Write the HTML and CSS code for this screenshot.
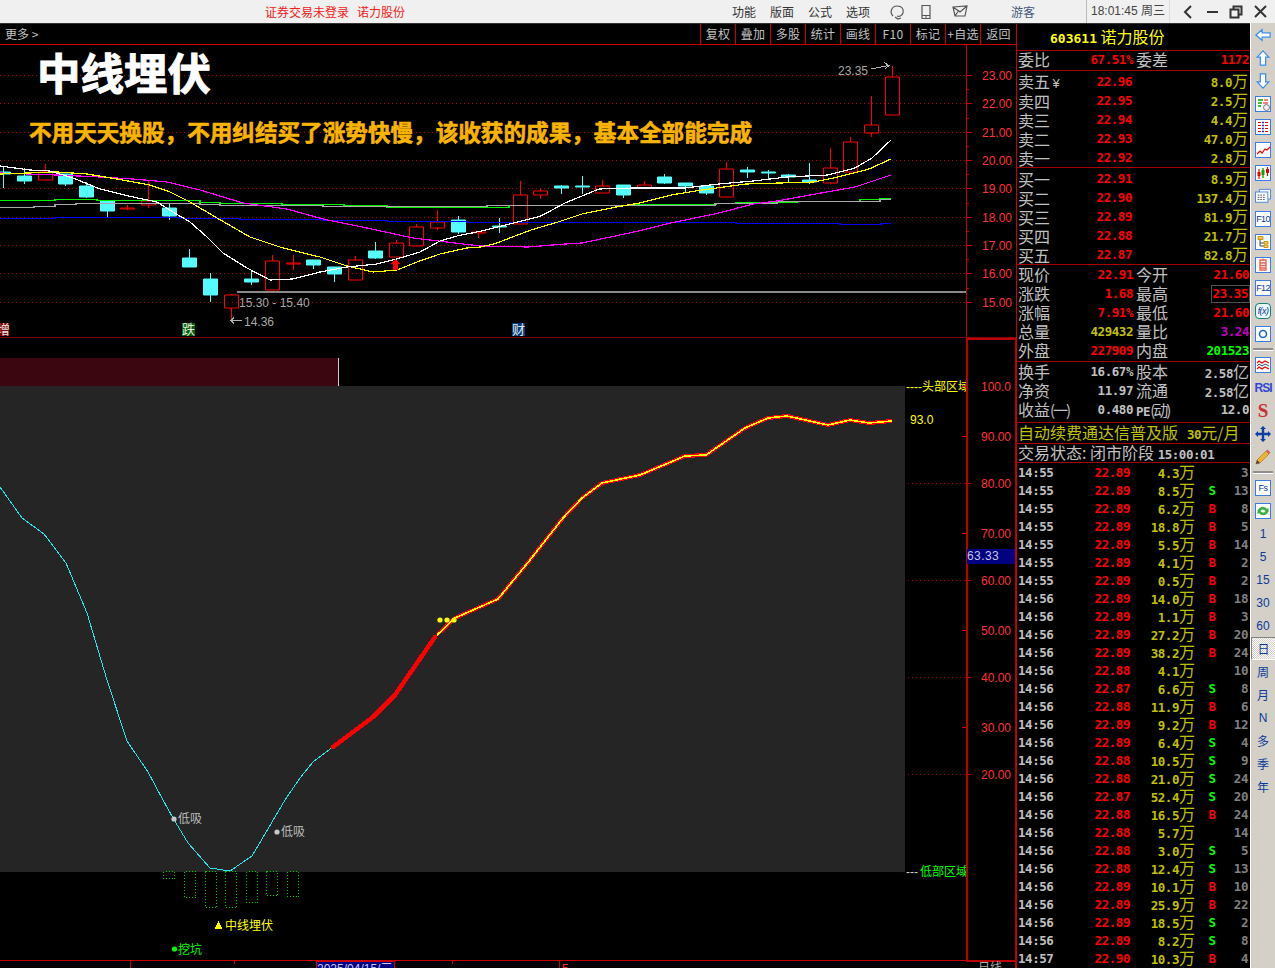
FILE: index.html
```html
<!DOCTYPE html>
<html lang="zh-CN">
<head>
<meta charset="utf-8">
<title>诺力股份 - 中线埋伏</title>
<link rel="stylesheet" href="styles.css">
</head>
<body>
<header class="titlebar">
  <div class="status"><span>证券交易未登录</span><span>诺力股份</span></div>
  <nav class="menu"><span>功能</span><span>版面</span><span>公式</span><span>选项</span></nav>
  <svg class="hicon first" viewBox="0 0 16 16"><path d="M4 12C0 8 3 2 8 2s7 3 6 7c-1 3-4 4-6 3M6 13l3 2 3-1"/></svg>
  <svg class="hicon" viewBox="0 0 16 16"><path d="M4 1.5h8v13H4zM4 11.5h8M7 13h2"/></svg>
  <svg class="hicon" viewBox="0 0 16 16"><path d="M1 3l14 -1-2 10H3zM1 3l7 5 7-6M7 6L3 12"/></svg>
  <span class="guest">游客</span>
  <span class="clock">18:01:45 周三</span>
  <div class="winctl">
    <svg viewBox="0 0 24 23"><path d="M15 6l-6 6 6 6"/></svg>
    <svg viewBox="0 0 24 23"><path d="M7 12h11"/></svg>
    <svg viewBox="0 0 24 23"><path d="M6.5 9.5h8v8h-8zM9.5 9V6.5h8v8H15"/></svg>
    <svg viewBox="0 0 24 23"><path d="M7 6l11 11M18 6L7 17"/></svg>
  </div>
</header>

<main class="workspace">
  <section class="chartcol">
    <div class="charttools">
      <span class="more">更多 &gt;</span>
      <div class="btns"><span>复权</span><span>叠加</span><span>多股</span><span>统计</span><span>画线</span><span>F10</span><span>标记</span><span>+自选</span><span>返回</span></div>
    </div>
    <svg class="chart" viewBox="0 45 1016 923" width="1016" height="923">
      <defs><clipPath id="paneclip"><rect x="0" y="338" width="966" height="622"/></clipPath></defs>

      <path class="dots" d="M0 75.5H966M0 103.5H966M0 132.5H966M0 160.5H966M0 188.5H966M0 217.5H966M0 245.5H966M0 273.5H966M0 302.5H966"/>
      <path class="gray-level" d="M237 292H966"/>

      <path class="candle-down" d="M3.5 167V188M-3.5 172h14v2h-14zM24.5 168V184M17.5 176h14v5h-14zM65.5 174V186M58.5 174h14v10h-14zM86.5 182V198M79.5 186h14v11h-14zM107.5 201V217M100.5 201h14v10h-14zM169.5 204V220M162.5 208h14v8h-14zM189.5 249V267M182.5 258h14v9h-14zM210.5 273V302M203.5 279h14v16h-14zM251.5 271V285M244.5 279h14v3h-14zM313.5 260V269M306.5 260h14v5h-14zM334.5 267V282M327.5 267h14v7h-14zM375.5 242V259M368.5 251h14v7h-14zM458.5 216V234M451.5 220h14v12h-14zM499.5 218V233M492.5 226h14v1h-14zM561.5 185V194M554.5 186h14v2h-14zM582.5 176V194M575.5 186h14v1h-14zM623.5 185V198M616.5 185h14v10h-14zM664.5 174V184M657.5 177h14v6h-14zM685.5 183V192M678.5 183h14v3h-14zM706.5 186V195M699.5 186h14v7h-14zM747.5 167V178M740.5 170h14v2h-14zM768.5 170V179M761.5 172h14v1h-14zM788.5 174V182M781.5 175h14v2h-14zM809.5 163V184M802.5 180h14v2h-14z"/>
      <path class="candle-up" d="M45.5 164V172M38.5 172h14v8h-14zM127.5 205V210M120.5 208h14v1h-14zM148.5 180V201M148.5 205V208M141.5 201h14v4h-14zM231.5 294V295M231.5 308V320M224.5 295h14v13h-14zM272.5 255V261M265.5 261h14v29h-14zM293.5 255V270M286.5 263h14v1h-14zM355.5 256V260M348.5 260h14v20h-14zM396.5 240V243M389.5 243h14v14h-14zM416.5 224V227M409.5 227h14v19h-14zM437.5 210V222M437.5 228V230M430.5 222h14v6h-14zM478.5 232V238M471.5 232h14v1h-14zM520.5 181V195M513.5 195h14v29h-14zM540.5 188V191M540.5 195V199M533.5 191h14v4h-14zM602.5 180V186M595.5 186h14v7h-14zM644.5 181V185M637.5 185h14v3h-14zM726.5 162V169M719.5 169h14v28h-14zM830.5 148V168M830.5 183V184M823.5 168h14v15h-14zM850.5 137V142M843.5 142h14v30h-14zM871.5 96V125M871.5 133V137M864.5 125h14v8h-14zM892.5 66V77M885.5 77h14v38h-14z"/>

      <path class="ma blue" d="M0 218.5H55V217.5H180V218.5H240V219.5H323V220.5H387V221.5H467V222.5H736V223.5H840V224.5H881V223.5H891"/>
      <path class="ma green" d="M0 200.5H55V199.5H97V200.5H200V202.5H220V203.5H282V204.5H344V205.5H387V207.5H509V205.5H633V204.5H716V203.5H736V202.5H797V201.5H860V199.5H880V198.5H891"/>
      <path class="ma silver" d="M0 207.5H34V206.5H55V204.5H76V203.5H200V204.5H220V205.5H323V206.5H487V205.5H715V203.5H777V201.5H880V199.5H891"/>
      <polyline class="ma magenta" points="0,173 57,175 100,177 133,179 167,182 200,190 243,203 287,209 323,219 367,228 413,238 447,242 480,246 528,247 565,244 582,243 634,232 671,223 719,213 753,204 777,201 821,193 855,187 891,175"/>
      <polyline class="ma yellow" points="0,174 57,172 87,174 117,179 150,185 170,192 190,202 217,218 250,237 283,248 320,257 347,266 373,272 397,270 417,262 440,254 467,248 480,247 494,244 531,230 558,222 582,214 616,207 640,203 671,195 702,190 746,184 814,182 838,177 869,169 891,159"/>
      <polyline class="ma white" points="0,166 30,170 50,171 73,178 100,189 133,197 157,202 173,212 190,222 207,237 223,253 247,268 270,280 293,279 320,272 347,267 377,264 400,258 420,252 440,241 457,236 477,232 514,223 541,216 565,203 599,189 634,188 685,188 719,184 753,181 787,177 828,175 855,168 872,158 891,140"/>
      <polygon class="red-fill" points="395.5,259 390,264 393,264 393,270 398,270 398,264 401,264"/>

      <text class="headline" x="37" y="90">中线埋伏</text>
      <text class="subline" x="29" y="141">不用天天换股<tspan class="tc">，</tspan>不用纠结买了涨势快慢<tspan class="tc">，</tspan>该收获的成果<tspan class="tc">，</tspan>基本全部能完成</text>

      <text class="note" x="838" y="75">23.35</text>
      <path class="note-line" d="M871 69L889 65.5M884 62.5L889 65.5L885 69"/>
      <text class="note" x="239" y="307">15.30 - 15.40</text>
      <path class="note-line" d="M231 320.5H242M234 317.5L231 320.5L234 323.5"/>
      <text class="note" x="244" y="326">14.36</text>

      <rect class="tag-red" x="0" y="323" width="9" height="13"/>
      <text class="tag" x="-3" y="334">增</text>
      <rect class="tag-green" x="182" y="323" width="13" height="13"/>
      <text class="tag" x="182" y="334">跌</text>
      <rect class="tag-blue" x="512" y="323" width="13" height="13"/>
      <text class="tag" x="512" y="334">财</text>

      <text class="axis" x="982" y="80">23.00</text>
      <text class="axis" x="982" y="108">22.00</text>
      <text class="axis" x="982" y="137">21.00</text>
      <text class="axis" x="982" y="165">20.00</text>
      <text class="axis" x="982" y="193">19.00</text>
      <text class="axis" x="982" y="222">18.00</text>
      <text class="axis" x="982" y="250">17.00</text>
      <text class="axis" x="982" y="278">16.00</text>
      <text class="axis" x="982" y="307">15.00</text>
      <path class="frame" d="M966.5 45V337M966 75.5h6M966 103.5h6M966 132.5h6M966 160.5h6M966 188.5h6M966 217.5h6M966 245.5h6M966 273.5h6M966 302.5h6M966 89.5h3M966 118.5h3M966 146.5h3M966 174.5h3M966 203.5h3M966 231.5h3M966 259.5h3M966 288.5h3"/>
      <path class="rule-dim" d="M0 337.5H1016"/>

      <rect class="band" x="0" y="358" width="338" height="28"/>
      <path class="band-edge" d="M338.5 358V386"/>
      <path class="dots" d="M908 483.5H966M908 580.5H966M908 677.5H966M908 774.5H966"/>
      <rect class="plot" x="0" y="386" width="905" height="486"/>

      <polyline class="cyan" points="0,487 22,518 44,534 66,563 87,613 107,680 127,741 148,772 163,800 173,818 188,843 210,868 230,871 252,856 285,800 300,778 313,762 333,747"/>
      <polyline class="thick-red" points="333,747 373,717 395,695 435,637"/>
      <polyline class="outline-red" points="437,635 455,618 498,599 530,560 563,518 582,498 602,483 640,475 685,456 706,455 745,428 768,418 787,416 828,425 850,420 869,423 892,421"/>
      <polyline class="thin-yellow" points="437,635 455,618 498,599 530,560 563,518 582,498 602,483 640,475 685,456 706,455 745,428 768,418 787,416 828,425 850,420 869,423 892,421"/>
      <circle class="yellow-fill" cx="440" cy="620" r="2.6"/><circle class="yellow-fill" cx="447" cy="620" r="2.6"/><circle class="yellow-fill" cx="454" cy="620" r="2.6"/>
      <circle class="gray-fill" cx="174" cy="819" r="2.6"/><text class="sig" x="178" y="823">低吸</text>
      <circle class="gray-fill" cx="277" cy="832" r="2.6"/><text class="sig" x="281" y="836">低吸</text>

      <path class="dotbars" d="M163.5 871.5v7h11v-7zM184.5 871.5v26h11v-26zM205.5 871.5v36h11v-36zM225.5 871.5v36h11v-36zM246.5 871.5v31h11v-31zM266.5 871.5v24h11v-24zM287.5 871.5v25h11v-25z"/>
      <polygon class="yellow-fill" points="218.5,921 222.5,929 214.5,929"/>
      <text class="sig-y" x="225" y="930">中线埋伏</text>
      <circle class="green-fill" cx="174.5" cy="949" r="2.6"/>
      <text class="sig-g" x="178" y="954">挖坑</text>

      <g clip-path="url(#paneclip)">
        <text class="sig-y" x="906" y="391">----头部区域</text>
        <text class="sig-g" x="906" y="876"><tspan class="dash-gray">---</tspan><tspan dx="2">低部区域</tspan></text>
      </g>
      <text class="sig-y" x="910" y="424">93.0</text>

      <text class="axis" x="981" y="391">100.0</text>
      <text class="axis" x="981" y="441">90.00</text>
      <text class="axis" x="981" y="488">80.00</text>
      <text class="axis" x="981" y="538">70.00</text>
      <text class="axis" x="981" y="585">60.00</text>
      <text class="axis" x="981" y="635">50.00</text>
      <text class="axis" x="981" y="682">40.00</text>
      <text class="axis" x="981" y="732">30.00</text>
      <text class="axis" x="981" y="779">20.00</text>

      <rect class="frame-box" x="966.5" y="338.5" width="49" height="622"/>
      <path class="frame" d="M0 960.5H966M962 386.5h4M962 436.5h4M966 483.5h5M962 533.5h4M966 580.5h5M962 630.5h4M966 677.5h5M962 727.5h4M966 774.5h5"/>
      <rect class="price-box" x="967" y="549" width="48" height="15"/>
      <text class="price-text" x="967" y="560">63.33</text>

      <path class="frame" d="M130.5 961V968M234.5 961V964M452.5 961V964M559.5 961V968M1015.500 961V968"/>
      <rect class="date-box" x="316" y="961" width="78" height="12"/>
      <text class="date-text" x="317" y="973">2025/04/15/三</text>
      <text class="axis" x="562" y="973">5</text>
      <text class="bottom-unit" x="978" y="972">日线</text>
    </svg>
  </section>

  <aside class="quote">
    <div class="qsec qtitle"><b class="n">603611</b> 诺力股份</div>
    <div class="qsec qpair"><div class="kv"><span class="l">委比</span><b class="n red">67.51%</b></div><div class="kv"><span class="l">委差</span><b class="n red">1172</b></div></div>
    <div class="qsec book">
      <div class="ob"><span class="l">卖五 <i class="yen">¥</i></span><b class="n red">22.96</b><span class="vol"><b class="n">8.0</b>万</span></div>
      <div class="ob"><span class="l">卖四</span><b class="n red">22.95</b><span class="vol"><b class="n">2.5</b>万</span></div>
      <div class="ob"><span class="l">卖三</span><b class="n red">22.94</b><span class="vol"><b class="n">4.4</b>万</span></div>
      <div class="ob"><span class="l">卖二</span><b class="n red">22.93</b><span class="vol"><b class="n">47.0</b>万</span></div>
      <div class="ob"><span class="l">卖一</span><b class="n red">22.92</b><span class="vol"><b class="n">2.8</b>万</span></div>
    </div>
    <div class="qsec book">
      <div class="ob"><span class="l">买一</span><b class="n red">22.91</b><span class="vol"><b class="n">8.9</b>万</span></div>
      <div class="ob"><span class="l">买二</span><b class="n red">22.90</b><span class="vol"><b class="n">137.4</b>万</span></div>
      <div class="ob"><span class="l">买三</span><b class="n red">22.89</b><span class="vol"><b class="n">81.9</b>万</span></div>
      <div class="ob"><span class="l">买四</span><b class="n red">22.88</b><span class="vol"><b class="n">21.7</b>万</span></div>
      <div class="ob"><span class="l">买五</span><b class="n red">22.87</b><span class="vol"><b class="n">82.8</b>万</span></div>
    </div>
    <div class="qsec stats">
      <div class="kv"><span class="l">现价</span><b class="n red">22.91</b></div><div class="kv"><span class="l">今开</span><b class="n red">21.60</b></div>
      <div class="kv"><span class="l">涨跌</span><b class="n red">1.68</b></div><div class="kv"><span class="l">最高</span><b class="n red boxed">23.35</b></div>
      <div class="kv"><span class="l">涨幅</span><b class="n red">7.91%</b></div><div class="kv"><span class="l">最低</span><b class="n red">21.60</b></div>
      <div class="kv"><span class="l">总量</span><b class="n olive">429432</b></div><div class="kv"><span class="l">量比</span><b class="n purple">3.24</b></div>
      <div class="kv"><span class="l">外盘</span><b class="n red">227909</b></div><div class="kv"><span class="l">内盘</span><b class="n green">201523</b></div>
    </div>
    <div class="qsec stats finance">
      <div class="kv"><span class="l">换手</span><b class="n">16.67%</b></div><div class="kv"><span class="l">股本</span><span class="amt"><b class="n">2.58</b>亿</span></div>
      <div class="kv"><span class="l">净资</span><b class="n">11.97</b></div><div class="kv"><span class="l">流通</span><span class="amt"><b class="n">2.58</b>亿</span></div>
      <div class="kv"><span class="l">收益<span class="paren">(一)</span></span><b class="n">0.480</b></div><div class="kv"><span class="l pe"><b class="n">PE</b><span class="paren">(动)</span></span><b class="n">12.0</b></div>
    </div>
    <div class="qsec promo">自动续费通达信普及版<b class="n promo-n">30</b>元/月</div>
    <div class="qsec state">交易状态: 闭市阶段 <b class="n">15:00:01</b></div>
    <div class="ticks">
      <div class="tk"><b class="n">14:55</b><b class="n red">22.89</b><span class="vol"><b class="n">4.3</b>万</span><b class="n side"></b><b class="n cnt">3</b></div>
      <div class="tk"><b class="n">14:55</b><b class="n red">22.89</b><span class="vol"><b class="n">8.5</b>万</span><b class="n side s">S</b><b class="n cnt">13</b></div>
      <div class="tk"><b class="n">14:55</b><b class="n red">22.89</b><span class="vol"><b class="n">6.2</b>万</span><b class="n side b">B</b><b class="n cnt">8</b></div>
      <div class="tk"><b class="n">14:55</b><b class="n red">22.89</b><span class="vol"><b class="n">18.8</b>万</span><b class="n side b">B</b><b class="n cnt">5</b></div>
      <div class="tk"><b class="n">14:55</b><b class="n red">22.89</b><span class="vol"><b class="n">5.5</b>万</span><b class="n side b">B</b><b class="n cnt">14</b></div>
      <div class="tk"><b class="n">14:55</b><b class="n red">22.89</b><span class="vol"><b class="n">4.1</b>万</span><b class="n side b">B</b><b class="n cnt">2</b></div>
      <div class="tk"><b class="n">14:55</b><b class="n red">22.89</b><span class="vol"><b class="n">0.5</b>万</span><b class="n side b">B</b><b class="n cnt">2</b></div>
      <div class="tk"><b class="n">14:56</b><b class="n red">22.89</b><span class="vol"><b class="n">14.0</b>万</span><b class="n side b">B</b><b class="n cnt">18</b></div>
      <div class="tk"><b class="n">14:56</b><b class="n red">22.89</b><span class="vol"><b class="n">1.1</b>万</span><b class="n side b">B</b><b class="n cnt">3</b></div>
      <div class="tk"><b class="n">14:56</b><b class="n red">22.89</b><span class="vol"><b class="n">27.2</b>万</span><b class="n side b">B</b><b class="n cnt">20</b></div>
      <div class="tk"><b class="n">14:56</b><b class="n red">22.89</b><span class="vol"><b class="n">38.2</b>万</span><b class="n side b">B</b><b class="n cnt">24</b></div>
      <div class="tk"><b class="n">14:56</b><b class="n red">22.88</b><span class="vol"><b class="n">4.1</b>万</span><b class="n side"></b><b class="n cnt">10</b></div>
      <div class="tk"><b class="n">14:56</b><b class="n red">22.87</b><span class="vol"><b class="n">6.6</b>万</span><b class="n side s">S</b><b class="n cnt">8</b></div>
      <div class="tk"><b class="n">14:56</b><b class="n red">22.88</b><span class="vol"><b class="n">11.9</b>万</span><b class="n side b">B</b><b class="n cnt">6</b></div>
      <div class="tk"><b class="n">14:56</b><b class="n red">22.89</b><span class="vol"><b class="n">9.2</b>万</span><b class="n side b">B</b><b class="n cnt">12</b></div>
      <div class="tk"><b class="n">14:56</b><b class="n red">22.89</b><span class="vol"><b class="n">6.4</b>万</span><b class="n side s">S</b><b class="n cnt">4</b></div>
      <div class="tk"><b class="n">14:56</b><b class="n red">22.88</b><span class="vol"><b class="n">10.5</b>万</span><b class="n side s">S</b><b class="n cnt">9</b></div>
      <div class="tk"><b class="n">14:56</b><b class="n red">22.88</b><span class="vol"><b class="n">21.0</b>万</span><b class="n side s">S</b><b class="n cnt">24</b></div>
      <div class="tk"><b class="n">14:56</b><b class="n red">22.87</b><span class="vol"><b class="n">52.4</b>万</span><b class="n side s">S</b><b class="n cnt">20</b></div>
      <div class="tk"><b class="n">14:56</b><b class="n red">22.88</b><span class="vol"><b class="n">16.5</b>万</span><b class="n side b">B</b><b class="n cnt">24</b></div>
      <div class="tk"><b class="n">14:56</b><b class="n red">22.88</b><span class="vol"><b class="n">5.7</b>万</span><b class="n side"></b><b class="n cnt">14</b></div>
      <div class="tk"><b class="n">14:56</b><b class="n red">22.88</b><span class="vol"><b class="n">3.0</b>万</span><b class="n side s">S</b><b class="n cnt">5</b></div>
      <div class="tk"><b class="n">14:56</b><b class="n red">22.88</b><span class="vol"><b class="n">12.4</b>万</span><b class="n side s">S</b><b class="n cnt">13</b></div>
      <div class="tk"><b class="n">14:56</b><b class="n red">22.89</b><span class="vol"><b class="n">10.1</b>万</span><b class="n side b">B</b><b class="n cnt">10</b></div>
      <div class="tk"><b class="n">14:56</b><b class="n red">22.89</b><span class="vol"><b class="n">25.9</b>万</span><b class="n side b">B</b><b class="n cnt">22</b></div>
      <div class="tk"><b class="n">14:56</b><b class="n red">22.89</b><span class="vol"><b class="n">18.5</b>万</span><b class="n side s">S</b><b class="n cnt">2</b></div>
      <div class="tk"><b class="n">14:56</b><b class="n red">22.89</b><span class="vol"><b class="n">8.2</b>万</span><b class="n side s">S</b><b class="n cnt">8</b></div>
      <div class="tk"><b class="n">14:57</b><b class="n red">22.90</b><span class="vol"><b class="n">10.3</b>万</span><b class="n side b">B</b><b class="n cnt">4</b></div>
    </div>
  </aside>

  <nav class="tools">
    <div class="tool"><svg class="ico" viewBox="0 0 18 16"><path class="ar" d="M1 8L8 2v3.5h9v5H8V14z"/></svg></div>
    <div class="tool"><svg class="ico" viewBox="0 0 16 18"><path class="ar" d="M8 1l6.500 7H11v9H5V8H1.500z"/></svg></div>
    <div class="tool"><svg class="ico" viewBox="0 0 16 18"><path class="ar" d="M8 17L1.500 10H5V1h6v9h3.500z"/></svg></div>
    <div class="tool"><svg class="ico" viewBox="0 0 16 16"><rect class="bx" x=".5" y=".5" width="15" height="15"/><path class="i-g" d="M3 4h5M3 7h4M3 10h3"/><path class="i-r" d="M9 4h4M8 7h5"/><circle class="i-k" cx="11.500" cy="11.500" r="3"/></svg></div>
    <div class="tool"><svg class="ico" viewBox="0 0 16 16"><rect class="bx" x=".5" y=".5" width="15" height="15"/><path class="i-r" d="M3 3.500h3M3 6.500h3M3 9.500h3M3 12.500h3"/><path class="i-b" d="M7 3.500h2M7 6.500h2M7 9.500h2M7 12.500h2"/><path class="i-r" d="M10 3.500h3M10 6.500h3M10 9.500h3M10 12.500h3"/></svg></div>
    <div class="tool"><svg class="ico" viewBox="0 0 16 16"><rect class="bx" x=".5" y=".5" width="15" height="15"/><path class="i-r" d="M2 12l3-3 2 2 3-4 2 1 3-3"/></svg></div>
    <div class="tool"><svg class="ico" viewBox="0 0 16 16"><rect class="bx" x=".5" y=".5" width="15" height="15"/><path class="i-r" d="M4 4v10M12.500 2v9"/><path class="i-g" d="M8 3v10"/><path class="i-fr" d="M2.500 7h3v4h-3zM11 4h3v4h-3z"/><path class="i-fg" d="M6.500 5h3v5h-3z"/></svg></div>
    <div class="tool"><svg class="ico" viewBox="0 0 18 16"><path class="bx" d="M5 .5h12.500v11H5z"/><rect class="bx" x=".5" y="3.500" width="14" height="11.500"/><path class="i-n" d="M3 7h9M3 9.500h9M3 12h9" stroke-dasharray="2 1"/></svg></div>
    <div class="tool"><span class="boxtxt">F10</span></div>
    <div class="tool"><svg class="ico" viewBox="0 0 16 16"><rect class="bx" x=".5" y=".5" width="15" height="15"/><path class="i-n" d="M5 6v6h4M5 9h4"/><path class="i-o" d="M3 2.500h5v3H3zM9 7.500h4v2.500H9zM9 11h4v2.500H9z"/></svg></div>
    <div class="tool"><svg class="ico" viewBox="0 0 16 16"><rect class="bx" x=".5" y=".5" width="15" height="15"/><path class="i-o2" d="M5 3h6v10H5zM5 6h6M5 8.500h6M5 11h6M8 1.500V3"/></svg></div>
    <div class="tool"><span class="boxtxt">F12</span></div>
    <div class="tool"><span class="boxtxt fx">f(x)</span></div>
    <div class="tool"><svg class="ico" viewBox="0 0 16 16"><rect class="bx" x=".5" y=".5" width="15" height="15"/><circle class="i-c" cx="8" cy="8" r="3.500"/></svg></div>
    <div class="toolsep"></div>
    <div class="tool"><svg class="ico" viewBox="0 0 16 16"><rect class="bx" x=".5" y=".5" width="15" height="15"/><path class="i-r" d="M2 6l2-2 3 2 3-2 4 2"/><path class="i-n" d="M2 9l2-2 3 2 3-2 4 2"/><path class="i-r" d="M2 12l2-2 3 2 3-2 4 2"/></svg></div>
    <div class="tool"><b class="rsi">RSI</b></div>
    <div class="tool"><b class="sbig">S</b></div>
    <div class="tool"><svg class="ico big" viewBox="0 0 16 16"><path class="i-fb" d="M8 0l3 3H9.200v3.800H13V5l3 3-3 3V9.200H9.200V13H11l-3 3-3-3h1.800V9.200H3V11L0 8l3-3v1.800h3.800V3H5z"/></svg></div>
    <div class="tool"><svg class="ico big" viewBox="0 0 16 16"><path class="i-pen" d="M2 11L11 2l3 3-9 9-4 1z"/><path class="i-tip" d="M11 2l1.500-1.500 3 3L14 5z"/><path class="i-nib" d="M2 11l3 3-4 1z"/></svg></div>
    <div class="toolsep"></div>
    <div class="tool"><span class="boxtxt">Fs</span></div>
    <div class="tool"><svg class="ico" viewBox="0 0 16 16"><rect class="bx" x=".5" y=".5" width="15" height="15"/><path class="i-rf" d="M3 7c1-3 6-5 9-1l1.500-1v4h-4l1-1c-2-2-4-2-5 0zM13 9c-1 3-6 5-9 1L2.500 11V7h4l-1 1c2 2 4 2 5 0z"/></svg></div>
    <div class="tool txt">1</div><div class="tool txt">5</div><div class="tool txt">15</div><div class="tool txt">30</div><div class="tool txt">60</div>
    <div class="tool txt active">日</div><div class="tool txt">周</div><div class="tool txt">月</div><div class="tool txt">N</div><div class="tool txt">多</div><div class="tool txt">季</div><div class="tool txt">年</div>
  </nav>
</main>
</body>
</html>
```

FILE: styles.css
```css
* { box-sizing: border-box; }
html, body { margin: 0; padding: 0; height: 100%; }
body {
  width: 1275px; height: 968px; overflow: hidden; background: #000;
  display: flex; flex-direction: column;
  font-family: "Noto Sans CJK SC", "Liberation Sans", sans-serif;
}

/* title bar */
.titlebar {
  height: 24px; flex: none; display: flex; align-items: center;
  background: #f0f0f0; border-bottom: 1px solid #333; font-size: 12px; color: #333; line-height: 23px;
}
.status { margin-left: 265px; width: 467px; flex: none; color: #f3201a; display: flex; gap: 8px; }
.menu { display: flex; gap: 14px; width: 139px; flex: none; white-space: nowrap; }
.hicon { width: 16px; height: 16px; flex: none; fill: none; stroke: #555; stroke-width: 1.2; margin-right: 18px; }
.hicon.first { margin-left: 18px; margin-right: 13px; }
.guest { color: #445a7a; margin-left: 25px; width: 75px; flex: none; }
.clock {
  width: 84px; height: 23px; flex: none; padding-left: 4px; color: #444; border-left: 1px solid #bbb; border-right: 1px solid #ddd; white-space: nowrap;
  font-family: "Liberation Sans", "Noto Sans CJK SC", sans-serif;
}
.winctl { display: flex; margin-left: 6px; flex: none; }
.winctl svg { width: 24px; height: 23px; fill: none; stroke: #333; stroke-width: 2; }

/* layout */
.workspace { flex: 1; display: flex; min-height: 0; }
.chartcol { width: 1016px; flex: none; display: flex; flex-direction: column; }
.charttools {
  height: 21px; flex: none; display: flex; justify-content: space-between;
  border-bottom: 1px solid #c00; color: #c0c0c0; font-size: 12px; line-height: 20px;
}
.more { padding-left: 5px; }
.btns { display: flex; }
.btns span { width: 35px; text-align: center; border-left: 1px solid #c00; white-space: nowrap; letter-spacing: .3px; }
.btns span:last-child { width: 36px; }
.chart { display: block; flex: none; shape-rendering: crispEdges; }

/* chart classes */
.dots { fill: none; stroke: #b30000; stroke-width: 1; stroke-dasharray: 1 3; }
.gray-level { stroke: #8a8a8a; stroke-width: 2; fill: none; }
.candle-down { stroke: #54fcfc; fill: #54fcfc; stroke-width: 1; shape-rendering: geometricPrecision; }
.candle-up { stroke: #f00; fill: none; stroke-width: 1; shape-rendering: geometricPrecision; }
.ma { fill: none; stroke-width: 1.2; }
.blue { stroke: #0000f0; }
.green { stroke: #00f000; }
.silver { stroke: #a8a8a8; }
.magenta { stroke: #f0f; }
.yellow { stroke: #ff0; }
.white { stroke: #fff; }
.red-fill { fill: #f00; }
.yellow-fill { fill: #ff0; }
.gray-fill { fill: #c8c8c8; }
.green-fill { fill: #0f0; }
circle { shape-rendering: geometricPrecision; }
.headline { fill: #fff; font-size: 43.5px; font-weight: 700; stroke: #fff; stroke-width: 1; }
.subline { fill: #f9b400; font-size: 22.6px; font-weight: 700; stroke: #f9b400; stroke-width: .6; }
.tc { font-family: "Noto Sans CJK TC", sans-serif; }
.note { fill: #a8a8a8; font: 12px "Liberation Sans", sans-serif; }
.note-line { fill: none; stroke: #b0b0b0; }
.tag-red { fill: #7a0000; } .tag-green { fill: #006000; } .tag-blue { fill: #003a78; }
.tag { fill: #e8e8e8; font-size: 13px; }
.axis { fill: #f33; font: 12px "Liberation Sans", sans-serif; }
.frame { fill: none; stroke: #c00; }
.frame-box { fill: none; stroke: #b00; stroke-width: 2; }
.rule-dim { stroke: #800; fill: none; }
.band { fill: #3c0610; }
.band-edge { stroke: #ccc; fill: none; }
.plot { fill: #252525; }
.cyan { fill: none; stroke: #28e6ec; stroke-width: 1; }
.thick-red { fill: none; stroke: #f00; stroke-width: 4.5; stroke-linecap: round; }
.outline-red { fill: none; stroke: #f00; stroke-width: 4; }
.thin-yellow { fill: none; stroke: #ff0; stroke-width: 1.6; }
.sig { fill: #bbb; font-size: 12px; }
.sig-y { fill: #ff0; font: 12px "Liberation Sans", "Noto Sans CJK SC", sans-serif; }
.sig-g { fill: #0f0; font: 12px "Liberation Sans", "Noto Sans CJK SC", sans-serif; }
.dash-gray { fill: #ccc; }
.dotbars { fill: none; stroke: #0c0; stroke-dasharray: 1 2; }
.price-box { fill: #000080; }
.price-text { fill: #c8c8e8; font: 12px "Liberation Sans", sans-serif; letter-spacing: .4px; }
.date-box { fill: #000080; stroke: #c00; }
.date-text { fill: #c8c8e8; font: 12px "Liberation Sans", "Noto Sans CJK SC", sans-serif; }
.bottom-unit { fill: #aaa; font-size: 12px; }

/* quote panel */
.quote {
  width: 234px; flex: none; display: flex; flex-direction: column; background: #000;
  border-left: 1px solid #c00; color: #c0c0c0; font-size: 16px; overflow: hidden;
}
.n { display: inline-block; padding-bottom: 2px; font-family: "DejaVu Sans Mono", "Noto Sans CJK SC", monospace; font-size: 12.500px; font-weight: 700; letter-spacing: -.45px; line-height: 15px; }
.l { display: block; font-size: 16px; color: #c0c0c0; line-height: 17px; padding-bottom: 2px; white-space: nowrap; }
.red { color: #f00; } .olive { color: #c0c000; } .purple { color: #c000c0; } .green { color: #0f0; }
.qsec { flex: none; border-bottom: 1px solid #a50000; }
.qtitle { height: 27px; color: #ff0; padding-left: 33px; line-height: 25px; white-space: nowrap; }
.qtitle .n { font-size: 13px; letter-spacing: 0; }
.qpair { height: 20px; display: grid; grid-template-columns: 115px 113px; column-gap: 3px; padding-left: 1px; }
.kv { display: flex; justify-content: space-between; align-items: center; height: 19px; line-height: 19px; min-width: 0; }
.kv .l { flex: none; }
.book { height: 97px; padding: 1px 0 0 1px; }
.ob { display: grid; grid-template-columns: 46px 68px 116px; height: 19px; line-height: 19px; align-items: center; }
.ob .n.red { text-align: right; padding-bottom: 4px; }
.yen { font-style: normal; font-size: 13px; font-family: "Liberation Sans", sans-serif; margin-left: -1px; }
.vol { color: #c0c000; text-align: right; font-size: 16px; white-space: nowrap; line-height: 17px; padding-bottom: 4px; }
.vol .n { padding-bottom: 0; }
.stats { height: 97px; padding: 1px 0 0 1px; display: grid; grid-template-columns: 115px 113px; column-gap: 3px; grid-auto-rows: 19px; }
.finance { height: 61px; }
.finance .n { color: #c0c0c0; }
.paren { letter-spacing: -2px; display: inline-block; font-size: 15px; }
.pe { font-size: 15px; }
.pe .n { padding: 0; }
.amt { white-space: nowrap; line-height: 17px; padding-bottom: 2px; }
.amt .n { padding-bottom: 0; }
.boxed { outline: 1px solid #505050; padding: 0 1px; height: 16px; line-height: 15px; margin-top: -1px; }
.promo { height: 21px; color: #c0c000; line-height: 18px; padding-left: 1px; white-space: nowrap; }
.promo-n { margin-left: 9px; padding: 0; }
.state { height: 19px; line-height: 17px; padding-left: 1px; white-space: nowrap; }
.state .n { color: #c0c0c0; padding: 0; }
.ticks { flex: 1; overflow: hidden; padding-left: 1px; }
.tk { display: grid; grid-template-columns: 40px 72px 65px 34px 19px; height: 18px; line-height: 18px; align-items: center; }
.tk > .n { padding-bottom: 4px; }
.tk > .red { text-align: right; }
.side { text-align: center; }
.side.s { color: #0f0; } .side.b { color: #f00; }
.cnt { color: #808080; text-align: right; }

/* right toolbar */
.tools {
  width: 25px; flex: none; background: #d4d0c8; border-left: 1px solid #fff; display: flex; flex-direction: column; align-items: stretch;
  margin-top: -1px; z-index: 1;
}
.tool { height: 23px; flex: none; display: flex; align-items: center; justify-content: center; color: #0a3a9a; }
.toolsep { height: 8px; flex: none; display: flex; align-items: center; padding: 0 2px; }
.toolsep::after { content: ""; display: block; width: 100%; height: 2px; background: #8e8e8e; border-bottom: 1px solid #fff; }
.ico { width: 16px; height: 16px; overflow: visible; }
.ar { fill: #fff; stroke: #3a8ff0; stroke-width: 1.4; }
.bx { fill: #fff; stroke: #3a7fe0; stroke-width: 1; }
.i-g { stroke: #0a0; stroke-width: 1.4; fill: none; }
.i-r { stroke: #e00; stroke-width: 1.2; fill: none; }
.i-b { stroke: #13c; stroke-width: 1.4; fill: none; }
.i-k { stroke: #777; fill: #eee; stroke-width: 1; }
.i-n { stroke: #446; fill: none; stroke-width: 1; }
.i-fr { fill: #e00; } .i-fg { fill: #0a0; }
.i-o { fill: #fc6; stroke: #c90; stroke-width: 1; }
.i-o2 { fill: none; stroke: #e65; stroke-width: 1.4; }
.i-c { fill: none; stroke: #1a68c8; stroke-width: 1.6; }
.i-fb { fill: #0c3ea8; }
.i-pen { fill: #f0b030; stroke: #a0701a; stroke-width: .6; }
.i-tip { fill: #c86060; }
.i-nib { fill: #444; }
.i-rf { fill: #3cb040; }
.boxtxt {
  width: 16px; height: 16px; background: #fff; border: 1px solid #3a7fe0; color: #0a3a9a;
  font: 9px/14px "Liberation Sans", sans-serif; text-align: center; letter-spacing: -.6px; white-space: nowrap; overflow: hidden;
}
.boxtxt.fx { border-color: #17807a; border-radius: 4px; font-style: italic; background: #e8f6f4; }
.rsi { font: 700 12px "Liberation Sans", sans-serif; letter-spacing: -1px; color: #3048d8; }
.sbig { font: 700 19px "Liberation Serif", serif; color: #c83030; }
.txt { font: 12px "Liberation Sans", "Noto Sans CJK SC", sans-serif; color: #0a3a9a; }
.active {
  background: repeating-conic-gradient(#fff 0 25%, #d4d0c8 0 50%) 0 0 / 2px 2px;
  border-top: 1px solid #808080; border-left: 1px solid #808080; border-bottom: 1px solid #fff;
}
```
